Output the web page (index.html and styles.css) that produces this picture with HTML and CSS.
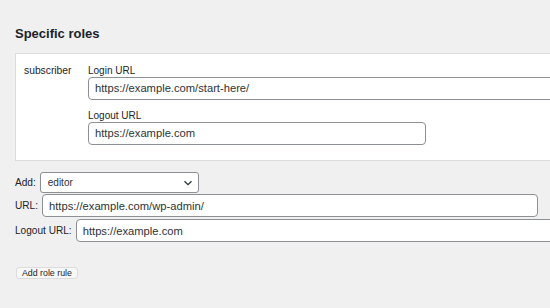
FILE: index.html
```html
<!DOCTYPE html>
<html>
<head>
<meta charset="utf-8">
<link rel="stylesheet" href="styles.css">
</head>
<body>
<div class="page">
  <h2 class="title">Specific roles</h2>
  <div class="roles-box">
    <div class="role-row">
      <div class="role-name">subscriber</div>
      <div class="role-fields">
        <label class="field-label">Login URL</label>
        <input class="text-input wide" type="text" value="https://example.com/start-here/">
        <label class="field-label second">Logout URL</label>
        <input class="text-input medium" type="text" value="https://example.com">
      </div>
    </div>
  </div>
  <div class="add-section">
    <div class="add-row">
      <span class="row-label">Add:</span>
      <div class="select-wrap">
        <select class="role-select"><option>editor</option></select>
        <svg class="chevron" width="10" height="6" viewBox="0 0 10 6"><path d="M1.5 1.2l3.5 3.5 3.5-3.5" fill="none" stroke="#2c3338" stroke-width="1.3"/></svg>
      </div>
    </div>
    <div class="add-row url-row">
      <span class="row-label">URL:</span>
      <input class="text-input url" type="text" value="https://example.com/wp-admin/">
    </div>
    <div class="add-row logout-row">
      <span class="row-label">Logout URL:</span>
      <input class="text-input wide" type="text" value="https://example.com">
    </div>
    <button class="add-button" type="button">Add role rule</button>
  </div>
</div>
</body>
</html>
```
FILE: styles.css
```css
html, body {
  margin: 0;
  padding: 0;
  overflow: hidden;
  background: #f0f0f1;
}
body {
  font-family: "Liberation Sans", Arial, sans-serif;
  color: #1d2327;
}
.page {
  width: 550px;
  height: 308px;
  padding: 26px 0 0 15px;
  box-sizing: border-box;
  overflow: hidden;
}
.title {
  margin: 0 0 11px;
  font-size: 13px;
  line-height: 16px;
  font-weight: bold;
  color: #1d2327;
  white-space: nowrap;
}
.roles-box {
  width: 620px;
  background: #fff;
  border: 1px solid #dcdcde;
  padding: 10.5px 8px 15.5px;
  box-sizing: border-box;
}
.role-row {
  display: flex;
}
.role-name {
  width: 64px;
  flex: none;
  font-size: 10.3px;
  line-height: 12px;
}
.role-fields {
  display: flex;
  flex-direction: column;
  align-items: flex-start;
}
.field-label {
  font-size: 10px;
  line-height: 12px;
}
.field-label.second {
  margin-top: 10px;
}
.text-input {
  box-sizing: border-box;
  height: 23px;
  margin: 0;
  padding: 0 6px;
  border: 1px solid #8c8f94;
  border-radius: 4px;
  background: #fff;
  font-family: "Liberation Sans", Arial, sans-serif;
  font-size: 11.2px;
  color: #2c3338;
  outline: none;
}
.text-input.wide {
  width: 520px;
  flex: none;
}
.text-input.medium {
  width: 338px;
}
.text-input.url {
  width: 496px;
}
.add-section {
  margin-top: 11px;
  display: flex;
  flex-direction: column;
  align-items: flex-start;
}
.add-row {
  display: flex;
  align-items: center;
  gap: 4px;
  white-space: nowrap;
}
.url-row {
  margin-top: 1px;
}
.logout-row {
  margin-top: 2px;
}
.row-label {
  font-size: 10.1px;
  line-height: 12px;
}
.select-wrap {
  position: relative;
  display: flex;
}
.role-select {
  -webkit-appearance: none;
  appearance: none;
  box-sizing: border-box;
  width: 159px;
  height: 21px;
  margin: 0;
  padding: 0 20px 0 7px;
  border: 1px solid #8c8f94;
  border-radius: 3px;
  background: #fff;
  font-family: "Liberation Sans", Arial, sans-serif;
  font-size: 10px;
  color: #2c3338;
}
.chevron {
  position: absolute;
  right: 6px;
  top: 8px;
}
.add-button {
  margin: 25px 0 0 1px;
  box-sizing: border-box;
  height: 12px;
  padding: 0 5px;
  border: 1px solid #dcdcde;
  border-radius: 3px;
  background: #f6f7f7;
  font-family: "Liberation Sans", Arial, sans-serif;
  font-size: 8.8px;
  line-height: 10px;
  color: #1d2327;
}
```
